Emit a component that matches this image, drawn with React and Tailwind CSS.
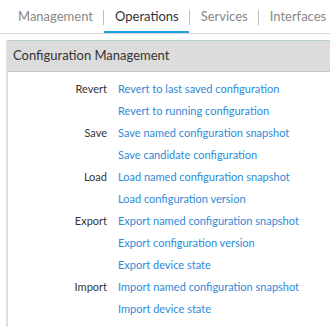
import React from "react";

const tabs = ["Management", "Operations", "Services", "Interfaces"];

const rows = [
  ["Revert", "Revert to last saved configuration"],
  ["", "Revert to running configuration"],
  ["Save", "Save named configuration snapshot"],
  ["", "Save candidate configuration"],
  ["Load", "Load named configuration snapshot"],
  ["", "Load configuration version"],
  ["Export", "Export named configuration snapshot"],
  ["", "Export configuration version"],
  ["", "Export device state"],
  ["Import", "Import named configuration snapshot"],
  ["", "Import device state"],
];

export default function App() {
  return (
    <div className="w-[330px] h-[327px] bg-white overflow-hidden" style={{ fontFamily: "Lato, 'Open Sans', sans-serif" }}>
      <div className="flex items-stretch h-[34px] border-b border-[#d6d6d6] pl-[7px]">
        {tabs.map((t, i) => (
          <React.Fragment key={t}>
            {i > 0 && (
              <div className="flex items-center shrink-0">
                <div className="w-px h-[15px] bg-[#bcbcbc] mt-[1px]" />
              </div>
            )}
            <div
              className={
                "flex items-center shrink-0 pl-[11px] pr-[10px] text-[13px] " +
                (t === "Operations"
                  ? "text-[#333333] border-b-2 border-[#1a9fe0] pt-[2px]"
                  : "text-[#888888]")
              }
            >
              {t}
            </div>
          </React.Fragment>
        ))}
      </div>
      <div className="ml-[6px] mt-[6px] border-l-2 border-[#e0e0e0] h-[300px]">
        <div className="h-[32px] bg-[#dcdcdc] border-t border-[#b9cfd6] border-b border-b-[#c4c4c4] flex items-center pl-[5px] text-[13px] text-[#333333]">
          Configuration Management
        </div>
        <div className="pt-[6px] text-[11px]">
          {rows.map(([label, link], i) => (
            <div key={i} className="flex h-[22px] items-center">
              <div className="w-[99px] text-right text-[#333333]">{label}</div>
              <div className="ml-[11px] text-[#2e8ad8]">{link}</div>
            </div>
          ))}
        </div>
      </div>
    </div>
  );
}
